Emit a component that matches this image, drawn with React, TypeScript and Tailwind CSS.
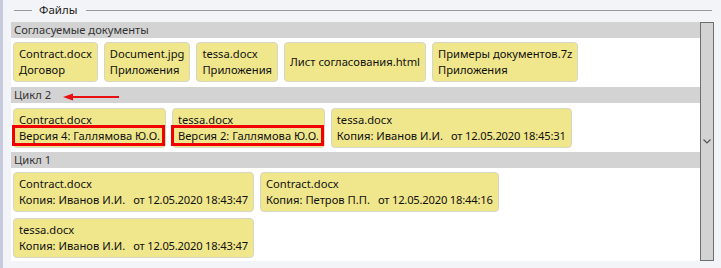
import React from "react";

const font = { fontFamily: '"Noto Sans", "Open Sans", sans-serif' };

type CardProps = { l1: string; l2?: string; date?: string; red?: boolean };

function Card({ l1, l2, date, red }: CardProps) {
  return (
    <div className="relative flex min-h-[39px] flex-col justify-center whitespace-nowrap rounded-[4px] border border-[#d6d6c4] bg-[#f0e68c] px-[5px] pt-[3px] pb-[3px] text-[11.2px] leading-[16px] text-[#111]">
      <div>{l1}</div>
      {l2 !== undefined && (
        <div className="flex">
          <span>{l2}</span>
          {date && <span className="ml-[8px] tracking-[-0.2px]">{date}</span>}
        </div>
      )}
      {red && (
        <div className="absolute left-[-2px] right-[0px] top-[16px] h-[21px] border-[3px] border-[#f00000]" />
      )}
    </div>
  );
}

function Header({ children }: { children: React.ReactNode }) {
  return (
    <div className="relative h-[16px] bg-[#d3d3d3] pl-[3px] text-[11.2px] leading-[16px] text-[#333]">
      {children}
    </div>
  );
}

export default function App() {
  return (
    <div className="relative h-[268px] w-[721px] overflow-hidden bg-[#f3f4f7]" style={font}>
      <div className="absolute left-0 top-0 h-full w-[3px] bg-[#c6cadc]" />
      <div className="flex h-[20px] items-center pl-[14px] pr-[9px]">
        <div className="h-px w-[18px] bg-[#9a9a9a]" />
        <div className="ml-[7px] text-[11.5px] leading-[16px] text-[#222]">Файлы</div>
        <div className="ml-[9px] h-px flex-1 bg-[#9a9a9a]" />
      </div>
      <div className="mt-[2px] flex">
        <div className="ml-[11px] w-[689px] bg-white">
          <Header>Согласуемые документы</Header>
          <div className="flex flex-wrap gap-[6px] pl-[2px] pt-[4px] pb-[5px]">
            <Card l1="Contract.docx" l2="Договор" />
            <Card l1="Document.jpg" l2="Приложения" />
            <Card l1="tessa.docx" l2="Приложения" />
            <Card l1="Лист согласования.html" />
            <Card l1="Примеры документов.7z" l2="Приложения" />
          </div>
          <Header>
            Цикл 2
            <svg className="absolute left-[42px] top-[5px]" width="70" height="10" viewBox="0 0 70 10">
              <line x1="16" y1="5" x2="66" y2="5" stroke="#e81010" strokeWidth="2.2" />
              <polygon points="10,5 20,1.5 20,8.5" fill="#e81010" />
            </svg>
          </Header>
          <div className="flex flex-wrap gap-[6px] pl-[2px] pt-[5px] pb-[4px]">
            <Card l1="Contract.docx" l2="Версия 4: Галлямова Ю.О." red />
            <Card l1="tessa.docx" l2="Версия 2: Галлямова Ю.О." red />
            <Card l1="tessa.docx" l2="Копия: Иванов И.И." date="от 12.05.2020 18:45:31" />
          </div>
          <Header>Цикл 1</Header>
          <div className="flex flex-wrap gap-[6px] pl-[2px] pt-[4px] pb-[3px]">
            <Card l1="Contract.docx" l2="Копия: Иванов И.И." date="от 12.05.2020 18:43:47" />
            <Card l1="Contract.docx" l2="Копия: Петров П.П." date="от 12.05.2020 18:44:16" />
            <Card l1="tessa.docx" l2="Копия: Иванов И.И." date="от 12.05.2020 18:43:47" />
          </div>
        </div>
        <div className="flex w-[14px] items-center justify-center border border-[#6e6e6e] bg-[#d3d3d3]">
          <svg width="8" height="5" viewBox="0 0 8 5">
            <polyline points="0.5,0.5 4,4 7.5,0.5" fill="none" stroke="#555" strokeWidth="1.2" />
          </svg>
        </div>
      </div>
    </div>
  );
}
